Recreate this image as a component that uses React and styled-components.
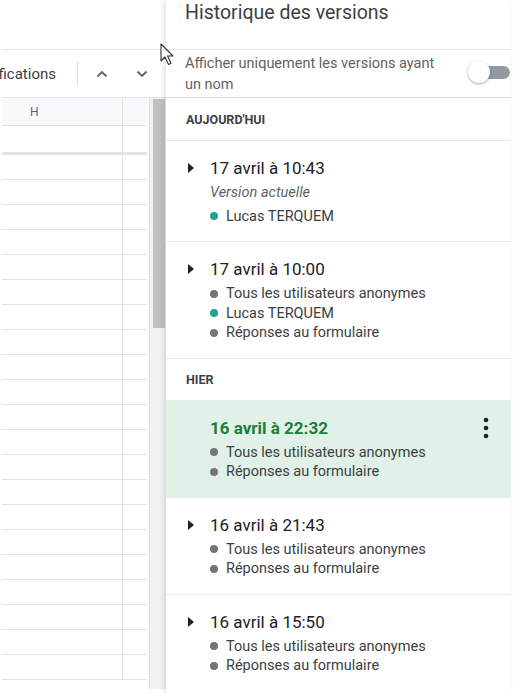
import React from 'react'
import styled, { createGlobalStyle } from 'styled-components'

const GlobalStyle = createGlobalStyle`
  html, body { margin: 0; padding: 0; background: #fff; overflow: hidden; }
  body { font-family: Roboto, "Liberation Sans", Arial, sans-serif; }
`

const versions = [
  { section: "Aujourd'hui" },
  { date: '17 avril à 10:43', note: 'Version actuelle', people: [{ name: 'Lucas TERQUEM', color: '#1fa497' }] },
  {
    date: '17 avril à 10:00',
    people: [
      { name: 'Tous les utilisateurs anonymes', color: '#757575' },
      { name: 'Lucas TERQUEM', color: '#1fa497' },
      { name: 'Réponses au formulaire', color: '#757575' }
    ]
  },
  { section: 'Hier', ruled: true },
  {
    date: '16 avril à 22:32',
    active: true,
    people: [
      { name: 'Tous les utilisateurs anonymes', color: '#757575' },
      { name: 'Réponses au formulaire', color: '#757575' }
    ]
  },
  {
    date: '16 avril à 21:43',
    people: [
      { name: 'Tous les utilisateurs anonymes', color: '#757575' },
      { name: 'Réponses au formulaire', color: '#757575' }
    ]
  },
  {
    date: '16 avril à 15:50',
    people: [
      { name: 'Tous les utilisateurs anonymes', color: '#757575' },
      { name: 'Réponses au formulaire', color: '#757575' }
    ]
  }
]

const rows = Array.from({ length: 21 })

function Chevron ({ up }) {
  return <svg width='12' height='8' viewBox='0 0 12 8'>
    <path d={up ? 'M1.5 6.5 L6 2 L10.5 6.5' : 'M1.5 1.5 L6 6 L10.5 1.5'} fill='none' stroke='#5f6368' strokeWidth='1.8' />
  </svg>
}

function Caret () {
  return <svg width='6' height='10' viewBox='0 0 6 10'>
    <path d='M0 0 L6 5 L0 10 Z' fill='#202124' />
  </svg>
}

function Kebab () {
  return <svg width='6' height='22' viewBox='0 0 6 22'>
    <circle cx='3' cy='3' r='2.3' fill='#202124' />
    <circle cx='3' cy='11' r='2.3' fill='#202124' />
    <circle cx='3' cy='19' r='2.3' fill='#202124' />
  </svg>
}

export default function App () {
  return <Screen>
    <GlobalStyle />
    <Sheet>
      <SheetTop />
      <Toolbar>
        <FindLabel><span>Notifications</span></FindLabel>
        <ToolSep />
        <ToolButton><Chevron up /></ToolButton>
        <ToolButton><Chevron /></ToolButton>
      </Toolbar>
      <SheetBody>
        <Grid>
          <GridRow $head>
            <Cell $head $first><span>H</span></Cell>
            <Cell $head />
          </GridRow>
          <GridRow $frozen>
            <Cell $first />
            <Cell />
          </GridRow>
          {rows.map((_, i) => <GridRow key={i}>
            <Cell $first />
            <Cell />
          </GridRow>)}
        </Grid>
        <Scrollbar>
          <Thumb />
        </Scrollbar>
      </SheetBody>
    </Sheet>

    <Panel>
      <PanelHead>Historique des versions</PanelHead>
      <FilterRow>
        <FilterLabel>Afficher uniquement les versions ayant un nom</FilterLabel>
        <Toggle>
          <Track />
          <Knob />
        </Toggle>
      </FilterRow>
      {versions.map((v, i) => {
        if (v.section) {
          return <SectionHead key={i} $ruled={v.ruled}>{v.section}</SectionHead>
        }
        return <Version key={i} $active={v.active}>
          <TitleRow>
            <CaretBox>{!v.active && <Caret />}</CaretBox>
            <VersionDate $active={v.active}>{v.date}</VersionDate>
            {v.active && <MoreButton><Kebab /></MoreButton>}
          </TitleRow>
          <Details>
            {v.note && <Note>{v.note}</Note>}
            {v.people.map((p, j) => <Person key={j}>
              <Dot $color={p.color} />
              {p.name}
            </Person>)}
          </Details>
        </Version>
      })}
    </Panel>

    <Cursor width='16' height='23' viewBox='0 0 16 23'>
      <path d='M1 1 L1 18 L5 14 L8.5 21.5 L11 20.3 L7.6 13 L13 13 Z' fill='#fff' stroke='#333' strokeWidth='1.1' strokeLinejoin='round' />
    </Cursor>
  </Screen>
}

const Screen = styled.div`
  position: relative;
  display: flex;
  width: 513px;
  height: 693px;
  overflow: hidden;
  background: #fff;
`

const Sheet = styled.div`
  flex: 0 0 164px;
  padding-left: 2px;
  display: flex;
  flex-direction: column;
`

const SheetTop = styled.div`
  height: 49px;
  flex-shrink: 0;
  border-bottom: 1px solid #e3e3e3;
`

const Toolbar = styled.div`
  height: 47px;
  flex-shrink: 0;
  border-bottom: 1px solid #e3e3e3;
  display: flex;
  align-items: center;
`

const FindLabel = styled.div`
  width: 56px;
  margin-left: -2px;
  overflow: hidden;
  display: flex;
  justify-content: flex-end;
  white-space: nowrap;
  font-size: 15px;
  color: #3c4043;
`

const ToolSep = styled.div`
  width: 1px;
  height: 24px;
  margin-left: 21px;
  background: #dadce0;
`

const ToolButton = styled.div`
  width: 24px;
  height: 24px;
  display: flex;
  align-items: center;
  justify-content: center;
  margin-left: 12px;
  & + & { margin-left: 16px; }
`

const SheetBody = styled.div`
  flex: 0 0 591px;
  display: flex;
`

const Grid = styled.div`
  width: 145px;
  padding-right: 2px;
  overflow: hidden;
`

const GridRow = styled.div`
  display: flex;
  height: ${({ $head, $frozen }) => $head ? '27px' : $frozen ? '26px' : '24px'};
  border-bottom: ${({ $frozen }) => $frozen ? '3px solid #dfe4ec' : '1px solid #e2e2e2'};
  background: ${({ $head }) => $head ? '#f8f9fa' : '#fff'};
`

const Cell = styled.div`
  flex: ${({ $first }) => $first ? '0 0 121px' : '1'};
  border-right: ${({ $first }) => $first ? '1px solid #e2e2e2' : 'none'};
  display: flex;
  align-items: center;
  padding-left: ${({ $first }) => $first ? '28px' : '0'};
  box-sizing: border-box;
  font-size: 12px;
  color: #5f6368;
`

const Scrollbar = styled.div`
  width: 17px;
  border-left: 1px solid #dedede;
  background: #f1f1f1;
  padding: 1px 0 0 3px;
  box-sizing: border-box;
`

const Thumb = styled.div`
  width: 12px;
  height: 229px;
  background: #c1c1c1;
`

const Panel = styled.div`
  flex: 0 0 345px;
  position: relative;
  z-index: 1;
  background: #fff;
  box-shadow: -2px 0 5px rgba(0, 0, 0, 0.12);
`

const PanelHead = styled.div`
  height: 48px;
  padding: 1px 0 0 19px;
  border-bottom: 1px solid #e3e3e3;
  font-size: 19.5px;
  line-height: 24px;
  color: #3c4043;
`

const FilterRow = styled.div`
  height: 47px;
  padding-left: 19px;
  border-bottom: 1px solid #dadce0;
  display: flex;
  align-items: center;
  justify-content: space-between;
`

const FilterLabel = styled.div`
  width: 262px;
  font-size: 14.5px;
  line-height: 21px;
  color: #5f6368;
`

const Toggle = styled.div`
  position: relative;
  width: 42px;
  height: 22px;
  margin: -3px 1px 0 0;
`

const Track = styled.div`
  position: absolute;
  left: 8px;
  top: 5px;
  width: 34px;
  height: 13px;
  border-radius: 6.5px;
  background: #949aa1;
`

const Knob = styled.div`
  position: absolute;
  left: 0;
  top: 0;
  width: 22px;
  height: 22px;
  border-radius: 50%;
  background: #fff;
  box-shadow: 0 1px 3px rgba(0, 0, 0, 0.35);
`

const SectionHead = styled.div`
  height: ${({ $ruled }) => $ruled ? '41px' : '42px'};
  border-top: ${({ $ruled }) => $ruled ? '1px solid #e8eaed' : 'none'};
  padding-left: 20px;
  display: flex;
  align-items: center;
  font-size: 12.5px;
  font-weight: 700;
  text-transform: uppercase;
  color: #3c4043;
`

const Version = styled.div`
  padding: 17px 15px 15px 22px;
  border-top: 1px solid ${({ $active }) => $active ? '#e0f1e8' : '#e8eaed'};
  background: ${({ $active }) => $active ? '#e0f1e8' : '#fff'};
`

const TitleRow = styled.div`
  display: flex;
  align-items: center;
  height: 20px;
`

const CaretBox = styled.div`
  width: 6px;
  margin-right: 16px;
  display: flex;
  align-items: center;
`

const VersionDate = styled.div`
  font-size: 17px;
  line-height: 20px;
  font-weight: ${({ $active }) => $active ? 700 : 400};
  color: ${({ $active }) => $active ? '#188038' : '#202124'};
`

const MoreButton = styled.div`
  margin-left: auto;
  width: 20px;
  display: flex;
  justify-content: center;
`

const Details = styled.div`
  margin: 5px 0 0 22px;
`

const Note = styled.div`
  font-size: 14.5px;
  line-height: 19.5px;
  font-style: italic;
  color: #5f6368;
  margin-bottom: 4px;
`

const Person = styled.div`
  display: flex;
  align-items: center;
  font-size: 14.5px;
  line-height: 19.5px;
  color: #3c4043;
`

const Dot = styled.span`
  width: 8px;
  height: 8px;
  border-radius: 50%;
  margin-right: 8px;
  background: ${({ $color }) => $color};
`

const Cursor = styled.svg`
  position: absolute;
  left: 160px;
  top: 43px;
  z-index: 5;
`
